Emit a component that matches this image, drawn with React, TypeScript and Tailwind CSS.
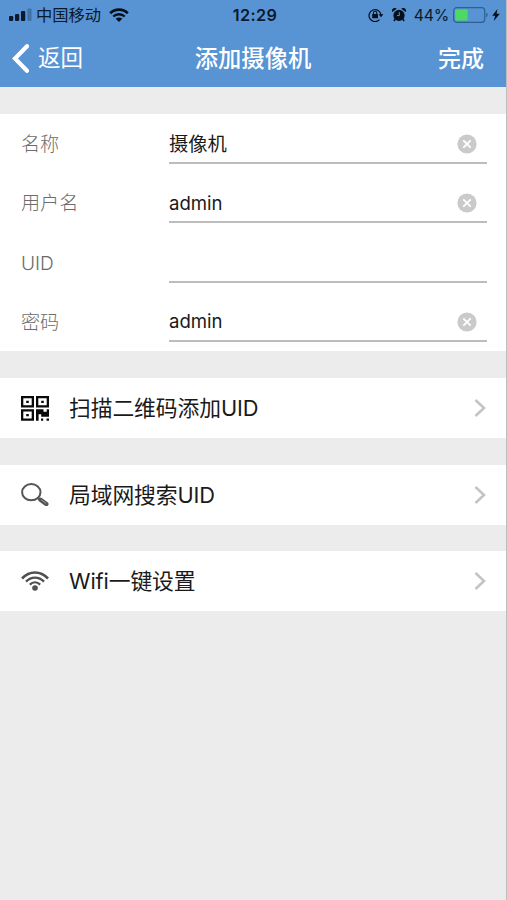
import type { ReactNode } from 'react';

const FIELDS = [
  { label: '名称', value: '摄像机' },
  { label: '用户名', value: 'admin' },
  { label: 'UID', value: '' },
  { label: '密码', value: 'admin' },
];

function SignalIcon() {
  return (
    <svg width="23" height="13" viewBox="0 0 23 13" className="shrink-0 text-[#0b1a2c]" fill="currentColor">
      <rect x="0" y="8" width="4.2" height="5" rx="1" />
      <rect x="6" y="6" width="4.2" height="7" rx="1" />
      <rect x="12" y="3" width="4.2" height="10" rx="1" />
      <rect x="18.5" y="0.5" width="4" height="12.5" rx="1" opacity="0.28" />
    </svg>
  );
}

function StatusWifiIcon() {
  return (
    <svg width="20" height="14" viewBox="0 0 20 14" className="shrink-0" fill="none" stroke="#06101c">
      <path d="M1.2 5.2a12.6 12.6 0 0 1 17.6 0" strokeWidth="2.7" />
      <path d="M4.3 8.5a8.2 8.2 0 0 1 11.4 0" strokeWidth="2.4" />
      <path d="M10 14 6.7 10.8a4.7 4.7 0 0 1 6.6 0Z" fill="#06101c" stroke="none" />
    </svg>
  );
}

function RotationLockIcon() {
  return (
    <svg width="16" height="14" viewBox="0 0 16 14" className="shrink-0" fill="none" stroke="#06101c">
      <path d="M11.5 11.6A6 6 0 1 1 13 7" strokeWidth="1.2" />
      <path d="M10.6 6.3h4.8L13 9.2Z" fill="#06101c" stroke="none" />
      <rect x="4.2" y="6" width="5.8" height="4.2" rx="0.5" fill="#06101c" stroke="none" />
      <path d="M5.4 6.3V5a1.7 1.7 0 0 1 3.4 0v1.3" strokeWidth="1.1" />
    </svg>
  );
}

function AlarmIcon() {
  return (
    <svg width="14" height="14" viewBox="0 0 14 14" className="shrink-0" fill="#06101c">
      <circle cx="7" cy="7.4" r="5.6" />
      <path d="M0.4 4A2.7 2.7 0 0 1 4.6 0.7Z" />
      <path d="M13.6 4A2.7 2.7 0 0 0 9.4 0.7Z" />
      <path d="m3.2 11-1.3 2M10.8 11l1.3 2" stroke="#06101c" strokeWidth="1.5" />
      <path d="M5 7.6h2.3V4.2" stroke="#5893d3" strokeWidth="1" fill="none" />
    </svg>
  );
}

function BatteryIcon() {
  return (
    <svg width="36" height="16" viewBox="0 0 36 16" className="shrink-0" fill="none">
      <rect x="0.7" y="0.7" width="31" height="14.6" rx="3" stroke="#2d5f94" strokeWidth="1.2" />
      <rect x="2.2" y="2.5" width="12.5" height="11" rx="1" fill="#4cd964" />
      <path d="M33.2 5.6c1.9.7 1.9 4.1 0 4.8Z" fill="#2d5f94" />
    </svg>
  );
}

function BoltIcon() {
  return (
    <svg width="8" height="12" viewBox="0 0 8 12" className="shrink-0" fill="#06101c">
      <path d="M5.4 0 0.2 6.7h2.9L1.8 12 7.8 4.8H4.6Z" />
    </svg>
  );
}

function BackIcon() {
  return (
    <svg width="17" height="29" viewBox="0 0 17 29" className="shrink-0" fill="none" stroke="white" strokeWidth="4.2">
      <path d="M15 2.2 3 14.5 15 26.8" strokeLinecap="round" />
    </svg>
  );
}

function ClearIcon() {
  return (
    <svg width="20" height="20" viewBox="0 0 20 20" className="shrink-0">
      <circle cx="10" cy="10" r="9.6" fill="#cacaca" />
      <path d="m6.3 6.3 7.4 7.4m0-7.4-7.4 7.4" stroke="white" strokeWidth="1.9" />
    </svg>
  );
}

function QrIcon() {
  return (
    <svg width="28" height="25" viewBox="0 0 28 25" fill="#0a0a0a">
      <path fillRule="evenodd" d="M0 0h13v11.5H0ZM2.3 2.2v7.1h8.4V2.2Z" />
      <path fillRule="evenodd" d="M15 0h13v11.5H15ZM17.3 2.2v7.1h8.4V2.2Z" />
      <path fillRule="evenodd" d="M0 13.3h13v11.5H0ZM2.3 15.5v7.1h8.4v-7.1Z" />
      <path d="M5.2 4.7h2.6v2.2H5.2ZM20.2 4.7h2.6v2.2h-2.6ZM5.2 18h2.6v2.2H5.2Z" />
      <path d="M15 13.3h7.5v2.5h3.2v-2.5H28v7.5h-7.8v-2.6h-2.6v6.6H15Z" />
      <path d="M20 22.5h2.2v2.3H20ZM25.5 22.5H28v2.3h-2.5Z" />
    </svg>
  );
}

function SearchIcon() {
  return (
    <svg width="28" height="23" viewBox="0 0 28 23" fill="none" stroke="#555">
      <ellipse cx="10.3" cy="9.2" rx="9.2" ry="8.1" strokeWidth="2" />
      <path d="m16.8 14.8 2.5 2" strokeWidth="2.2" />
      <path d="m19.5 16.8 5.8 4.2" strokeWidth="4.4" strokeLinecap="round" />
      <path d="m20.5 17 4.3 3.1" stroke="#999" strokeWidth="1" strokeLinecap="round" />
    </svg>
  );
}

function WifiIcon() {
  return (
    <svg width="28" height="20" viewBox="0 0 28 20" fill="none" stroke="#505050">
      <path d="M1 7.5C8.5-0.5 19.5-0.5 27 7.5" strokeWidth="2.6" />
      <path d="M5 10.7c5.2-5.4 12.8-5.4 18 0" strokeWidth="2.4" />
      <path d="M8.8 13.6c3.1-3 7.3-3 10.4 0" strokeWidth="2.2" />
      <circle cx="14" cy="17" r="2.8" fill="#505050" stroke="none" />
    </svg>
  );
}

function ActionRow({ icon, label }: { icon: ReactNode; label: string }) {
  return (
    <button className="flex h-[60px] w-full items-center bg-white pr-[20px] pl-[21px] text-left">
      <span className="flex w-[48px] shrink-0 items-center">{icon}</span>
      <span className="flex-1 pt-[2px] text-[21.8px] leading-none tracking-[-0.1px] text-[#1a1a1a]">{label}</span>
      <svg width="12" height="18" viewBox="0 0 12 18" fill="none" stroke="#c4c4c8" strokeWidth="2.6">
        <path d="m1.5 1 8.5 8-8.5 8" />
      </svg>
    </button>
  );
}

export default function App() {
  return (
    <div className="h-[900px] w-[507px] overflow-hidden border-r border-[#bdbdbd] bg-[#ececec] font-['Inter','Noto_Sans_CJK_SC',sans-serif]">
      <header className="h-[87px] bg-[#5893d3]">
        <div className="grid h-[30px] grid-cols-[1fr_auto_1fr] items-center px-[6px] text-[#0b1a2c]">
          <div className="flex items-center pl-[3px]">
            <SignalIcon />
            <span className="mr-[8px] ml-[4px] text-[16.3px] leading-none">中国移动</span>
            <StatusWifiIcon />
          </div>
          <span className="pl-[4px] text-[16.2px] leading-none font-semibold tracking-[0.4px]">12:29</span>
          <div className="flex items-center justify-end">
            <RotationLockIcon />
            <span className="mr-[8px] ml-[8px]">
              <AlarmIcon />
            </span>
            <span className="mr-[4px] pt-px text-[15.8px] leading-none tracking-[-0.2px]">44%</span>
            <BatteryIcon />
            <span className="ml-[3px]">
              <BoltIcon />
            </span>
          </div>
        </div>
        <nav className="grid h-[56px] grid-cols-[1fr_auto_1fr] items-center px-[12px] text-white">
          <button className="flex items-center gap-[9px] text-[22.5px] leading-none">
            <BackIcon />
            返回
          </button>
          <h1 className="pt-px text-[23.3px] leading-none font-medium">添加摄像机</h1>
          <button className="pt-[2px] pr-[10px] text-right text-[23px] leading-none font-medium">完成</button>
        </nav>
      </header>

      <form className="mt-[27px] h-[237px] bg-white pr-[19px] pl-[21px]">
        {FIELDS.map(({ label, value }) => (
          <div key={label} className="flex h-[59.4px] items-start">
            <label className="flex h-[61px] w-[148px] shrink-0 items-center text-[19.1px] leading-none font-light text-[#6c6c6c]">
              {label}
            </label>
            <div className="flex h-[50px] flex-1 items-center justify-between border-b-2 border-[#bdbdbd] pt-[12px] pr-[10px]">
              <span
                className={
                  value === 'admin'
                    ? 'pb-px text-[18.6px] leading-none text-[#1a1a1a]'
                    : 'pt-[2px] text-[19.3px] leading-none text-[#1a1a1a]'
                }
              >
                {value}
              </span>
              {value && <ClearIcon />}
            </div>
          </div>
        ))}
      </form>

      <div className="mt-[27px] flex flex-col gap-[26.5px]">
        <ActionRow icon={<QrIcon />} label="扫描二维码添加UID" />
        <ActionRow icon={<SearchIcon />} label="局域网搜索UID" />
        <ActionRow icon={<WifiIcon />} label="Wifi一键设置" />
      </div>
    </div>
  );
}
